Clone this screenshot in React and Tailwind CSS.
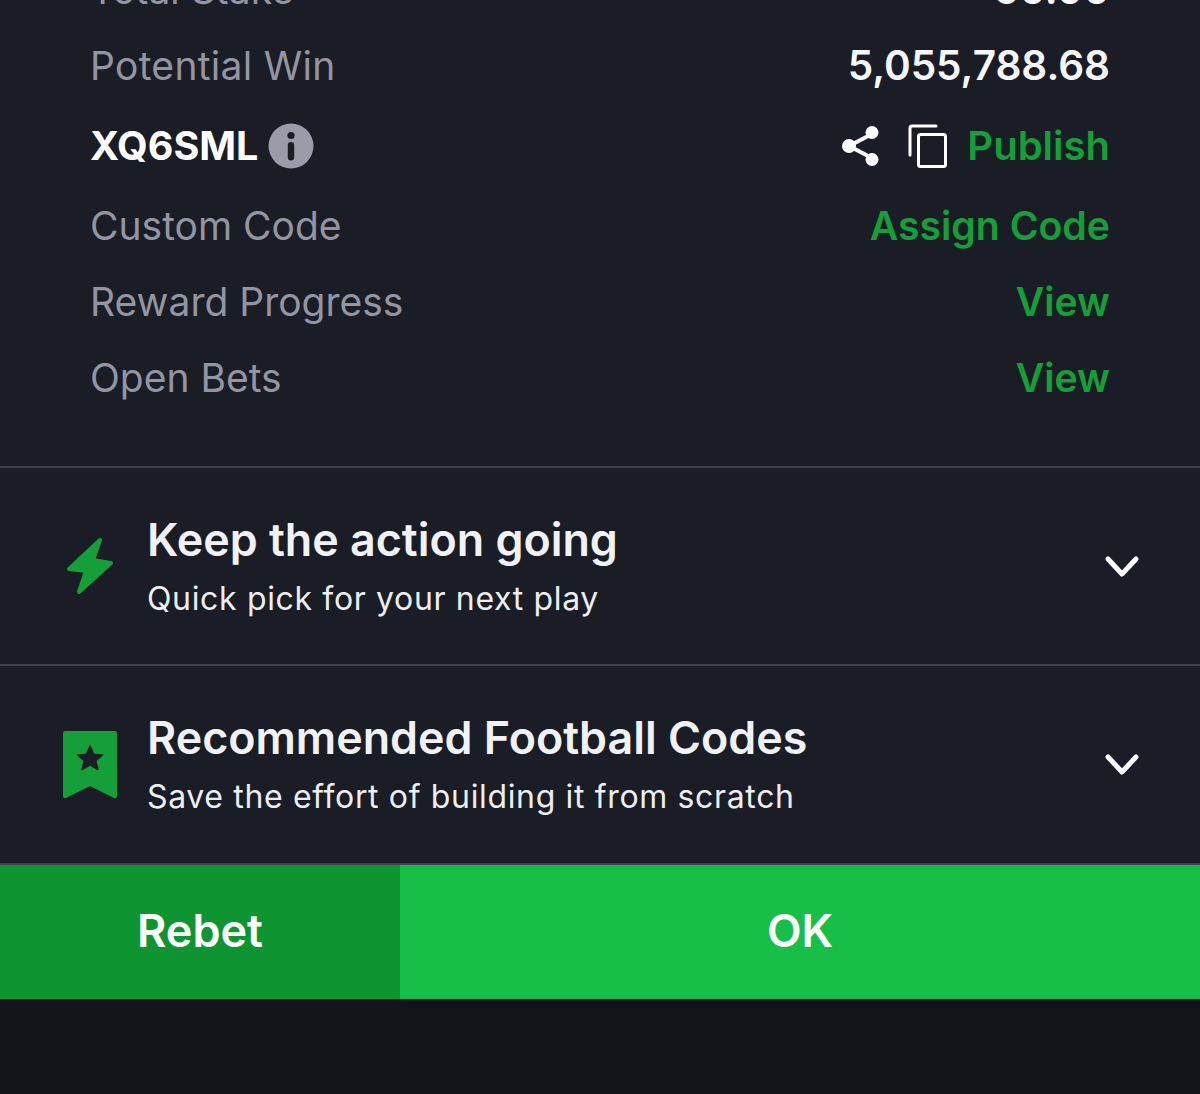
const font = { fontFamily: 'Inter, "Liberation Sans", sans-serif' };

function Row({ label, value, valueClass, valueSize = "text-[39.2px]", labelClass = "", className = "h-[76px]" }) {
  return (
    <div className={`flex items-center justify-between ${className}`}>
      <span className={`text-[39px] leading-[44px] text-[#9396a2] ${labelClass}`}>{label}</span>
      <span className={`${valueSize} leading-[44px] font-semibold ${valueClass}`}>{value}</span>
    </div>
  );
}

function Section({ icon, title, subtitle, className }) {
  return (
    <div className={`flex items-center border-b-2 border-[#3f424e] ${className}`}>
      <div className="w-[147px] shrink-0 flex justify-start pl-[62px] box-border">{icon}</div>
      <div className="flex-1 min-w-0">
        <div className="text-[44.8px] leading-[52px] font-semibold text-[#f1f2f5]">{title}</div>
        <div className="text-[32px] leading-[40px] mt-[13px] text-[#eceef1] tracking-[0.65px]">{subtitle}</div>
      </div>
      <svg width="36" height="24" viewBox="0 0 36 24" className="mr-[60px] mt-[1px]" fill="none" stroke="#fff" strokeWidth="5" strokeLinecap="round" strokeLinejoin="round">
        <path d="M4 4 L18 19 L32 4" />
      </svg>
    </div>
  );
}

export default function App() {
  return (
    <div style={font} className="h-[1094px] w-[1200px] overflow-hidden bg-[#1a1d26] flex flex-col antialiased">
      <div className="px-[90px] -mt-[48px] pb-[50px]">
        <Row label="Total Stake" value="50.00" valueSize="text-[40.5px]" valueClass="text-white" />
        <Row label="Potential Win" value="5,055,788.68" valueSize="text-[40.5px]" labelClass="tracking-[0.3px]" valueClass="text-[#f6f7f8]" />
        <div className="flex items-center justify-between h-[84px]">
          <div className="flex items-center gap-[10px]">
            <span className="text-[39.5px] leading-[44px] font-bold text-white">XQ6SML</span>
            <svg width="46" height="46" viewBox="0 0 46 46">
              <circle cx="23" cy="23" r="22.5" fill="#9a9ca9" />
              <circle cx="23" cy="12.5" r="3.6" fill="#1a1d26" />
              <rect x="19.8" y="19" width="6.4" height="18.5" rx="3.2" fill="#1a1d26" />
            </svg>
          </div>
          <div className="flex items-center">
            <svg width="40" height="44" viewBox="0 0 40 44" fill="#fff" stroke="#fff" className="mr-[27px]">
              <path d="M31 10 L8 22 L31 34" fill="none" strokeWidth="4" strokeLinejoin="round" />
              <circle cx="31" cy="8.5" r="6.5" strokeWidth="0" />
              <circle cx="31" cy="35.5" r="6.5" strokeWidth="0" />
              <circle cx="8" cy="22" r="7" strokeWidth="0" />
            </svg>
            <svg width="40" height="44" viewBox="0 0 40 44" fill="none" stroke="#fff" strokeWidth="3" className="mr-[19px]">
              <path d="M2 31 V4 Q2 2 4 2 H28" strokeLinecap="round" />
              <rect x="10.5" y="10.5" width="27" height="32" rx="2" />
            </svg>
            <span className="text-[40px] leading-[44px] font-semibold text-[#149f38]">Publish</span>
          </div>
        </div>
        <Row label="Custom Code" value="Assign Code" valueClass="text-[#149f38]" />
        <Row label="Reward Progress" value="View" valueClass="text-[#149f38]" />
        <Row label="Open Bets" value="View" valueClass="text-[#149f38]" />
      </div>
      <div className="h-[2px] bg-[#3f424e]" />
      <Section
        className="h-[198px]"
        title="Keep the action going"
        subtitle="Quick pick for your next play"
        icon={
          <svg width="48" height="58" viewBox="0 0 48 58" className="ml-[4px]" fill="#149f38" stroke="#149f38" strokeWidth="4" strokeLinejoin="round">
            <path d="M34 3 L3 32 L20 34 L13 55 L45 26 L27 23 Z" />
          </svg>
        }
      />
      <Section
        className="h-[199px]"
        title="Recommended Football Codes"
        subtitle="Save the effort of building it from scratch"
        icon={
          <svg width="56" height="70" viewBox="0 0 56 70">
            <path d="M1 3 Q1 1 3 1 H53 Q55 1 55 3 V66 Q55 69 52 68 L28 56 L4 68 Q1 69 1 66 Z" fill="#149f38" />
            <path d="M28 16 L31.7 24.3 L40.5 25 L33.8 30.8 L35.9 39.5 L28 34.8 L20.1 39.5 L22.2 30.8 L15.5 25 L24.3 24.3 Z" fill="#1a1d26" stroke="#1a1d26" strokeWidth="1.5" strokeLinejoin="round" />
          </svg>
        }
      />
      <div className="flex h-[134px] shrink-0">
        <button className="w-[400px] bg-[#0f9432] text-white text-[45px] font-semibold pb-[3px]">Rebet</button>
        <button className="flex-1 bg-[#17bf49] text-white text-[45px] font-semibold pb-[3px]">OK</button>
      </div>
      <div className="flex-1 bg-[#121419]" />
    </div>
  );
}
